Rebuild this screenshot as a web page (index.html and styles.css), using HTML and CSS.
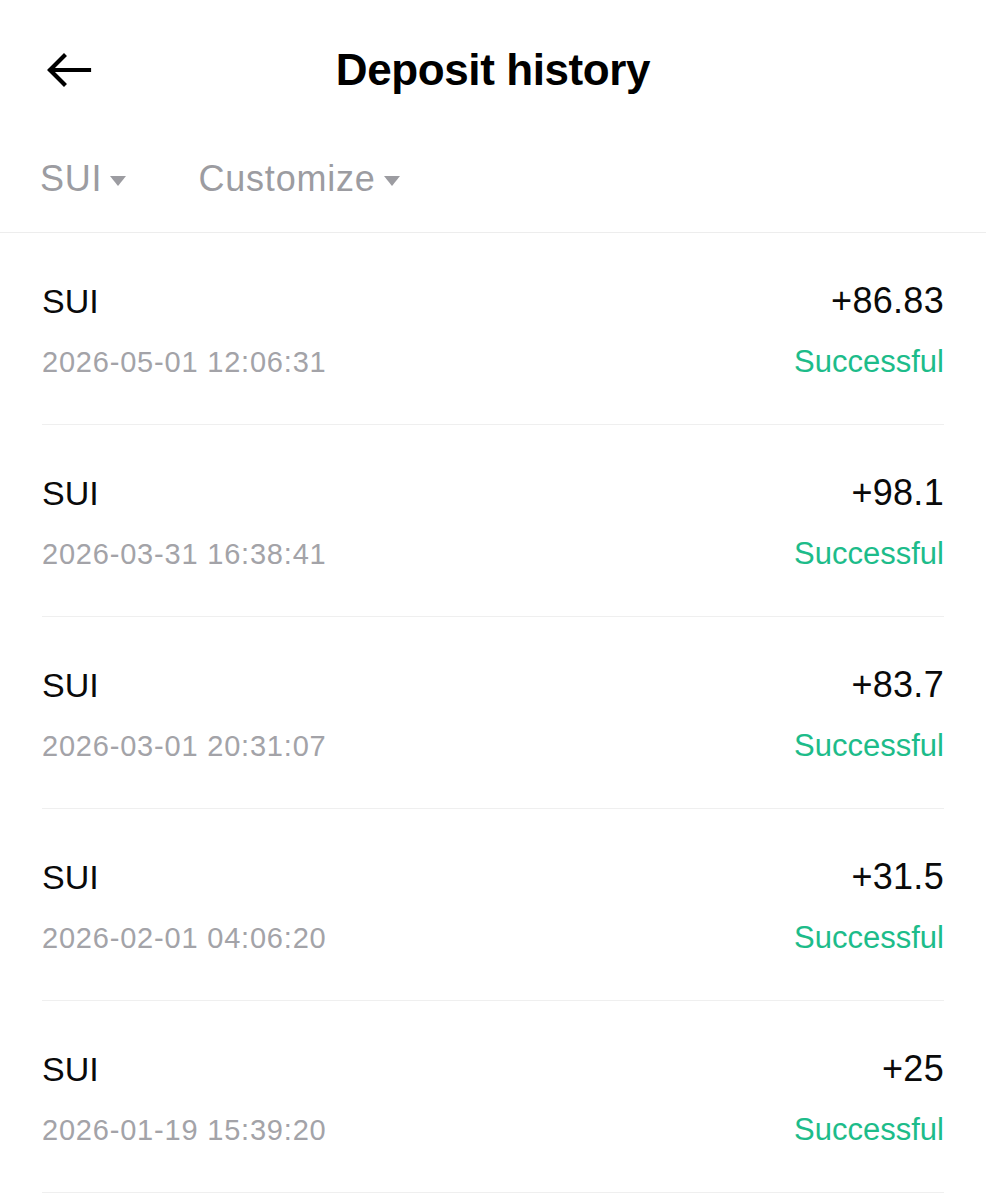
FILE: index.html
```html
<!DOCTYPE html>
<html lang="en">
<head>
    <meta charset="UTF-8">
    <meta name="viewport" content="width=device-width, initial-scale=1.0">
    <title>Deposit history</title>
    <link rel="stylesheet" href="styles.css">
</head>
<body>
    <header class="topbar">
        <a class="back" href="#">
            <svg width="46" height="36" viewBox="0 0 46 36" fill="none" stroke="#000" stroke-width="4.2" stroke-linecap="square">
                <path d="M43 18H5"/>
                <path d="M18 4L4 18L18 32"/>
            </svg>
        </a>
        <h1>Deposit history</h1>
    </header>

    <div class="filters">
        <div class="filter">SUI<span class="caret"></span></div>
        <div class="filter">Customize<span class="caret"></span></div>
    </div>

    <ul class="records">
        <li class="record">
            <div class="line"><span class="coin">SUI</span><span class="amount">+86.83</span></div>
            <div class="line"><span class="time">2026-05-01 12:06:31</span><span class="status">Successful</span></div>
        </li>
        <li class="record">
            <div class="line"><span class="coin">SUI</span><span class="amount">+98.1</span></div>
            <div class="line"><span class="time">2026-03-31 16:38:41</span><span class="status">Successful</span></div>
        </li>
        <li class="record">
            <div class="line"><span class="coin">SUI</span><span class="amount">+83.7</span></div>
            <div class="line"><span class="time">2026-03-01 20:31:07</span><span class="status">Successful</span></div>
        </li>
        <li class="record">
            <div class="line"><span class="coin">SUI</span><span class="amount">+31.5</span></div>
            <div class="line"><span class="time">2026-02-01 04:06:20</span><span class="status">Successful</span></div>
        </li>
        <li class="record">
            <div class="line"><span class="coin">SUI</span><span class="amount">+25</span></div>
            <div class="line"><span class="time">2026-01-19 15:39:20</span><span class="status">Successful</span></div>
        </li>
    </ul>
</body>
</html>
```

FILE: styles.css
```css
body {
    font-family: 'Liberation Sans', Arial, sans-serif;
    margin: 0;
    padding: 0;
    background-color: #fff;
    color: #000;
    overflow-x: hidden;
}

.topbar {
    position: relative;
    height: 140px;
    display: flex;
    align-items: center;
    justify-content: center;
}

.back {
    position: absolute;
    left: 46px;
    top: 52px;
    display: block;
    line-height: 0;
}

.topbar h1 {
    margin: 0;
    font-size: 44px;
    font-weight: bold;
    letter-spacing: -0.4px;
}

.filters {
    display: flex;
    align-items: center;
    height: 93px;
    box-sizing: border-box;
    padding: 0 40px 14px 40px;
    gap: 72px;
    border-bottom: 1px solid #ededed;
}

.filter {
    display: flex;
    align-items: center;
    font-size: 36px;
    letter-spacing: 0.8px;
    color: #9c9ca1;
}

.caret {
    width: 0;
    height: 0;
    margin-left: 8px;
    margin-top: 4px;
    border-left: 8px solid transparent;
    border-right: 8px solid transparent;
    border-top: 10px solid #9c9ca1;
}

.records {
    list-style: none;
    margin: 0;
    padding: 0 42px 0 42px;
}

.record {
    height: 192px;
    box-sizing: border-box;
    padding-top: 48px;
    border-bottom: 1px solid #efefef;
}

.line {
    display: flex;
    justify-content: space-between;
    align-items: center;
    height: 40px;
}

.line + .line {
    margin-top: 21px;
}

.coin,
.amount {
    font-size: 34px;
    color: #0a0a0a;
}

.amount {
    font-size: 36px;
    letter-spacing: 0.3px;
}

.time {
    font-size: 29px;
    letter-spacing: 0.8px;
    color: #a3a3a8;
}

.status {
    font-size: 31px;
    color: #1dbc8a;
}
```
